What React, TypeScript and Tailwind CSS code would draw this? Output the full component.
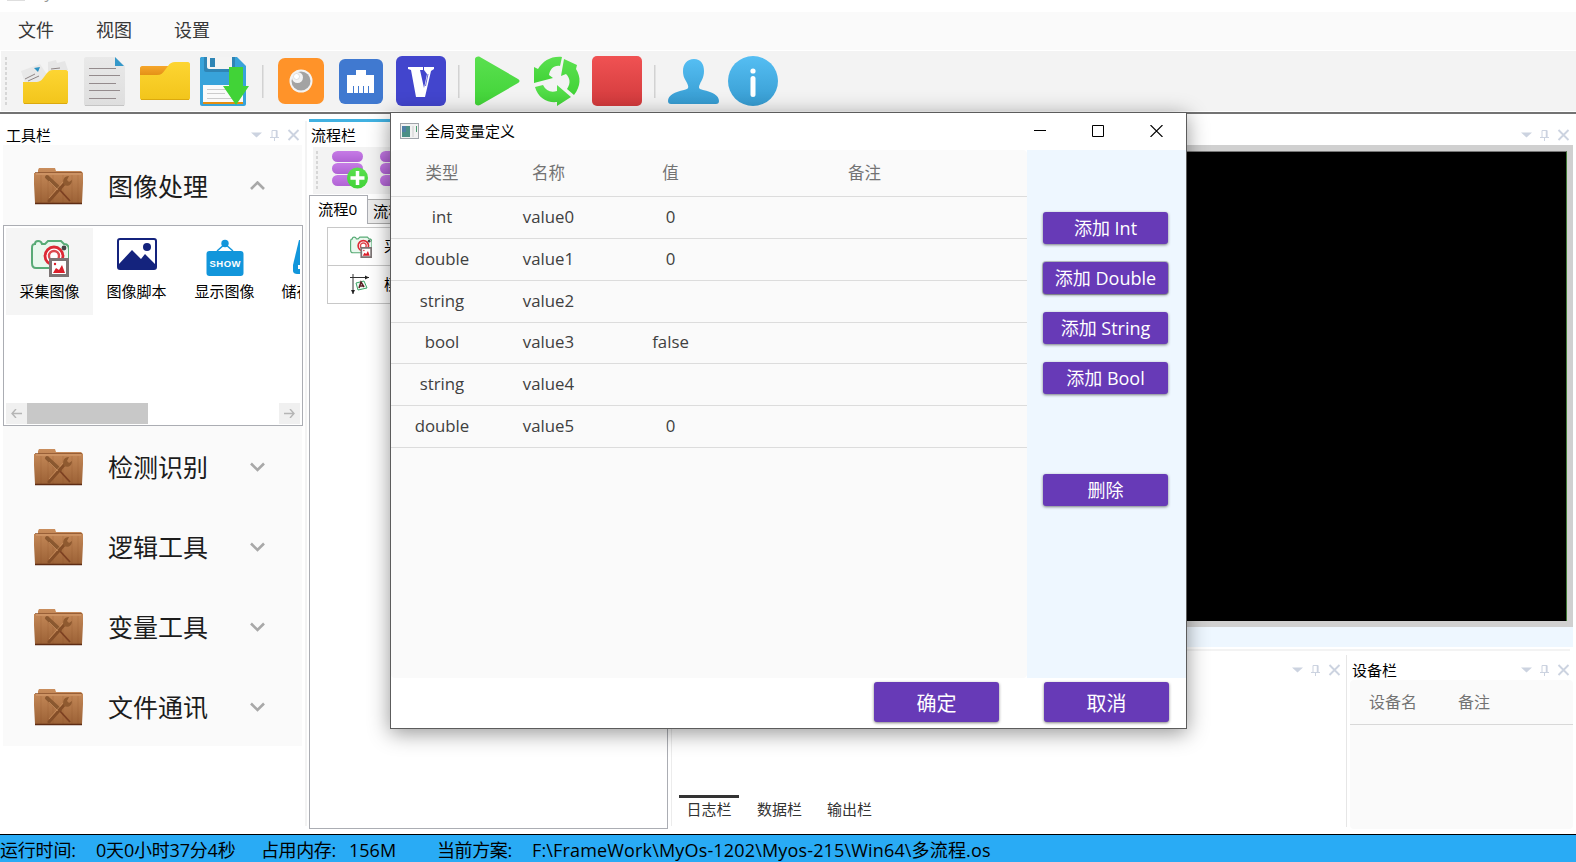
import React from "react";

type Kids = { children?: React.ReactNode };

function Svg({ w, h, vb, children, className = "" }: Kids & { w: number; h: number; vb?: string; className?: string }) {
  return (
    <svg width={w} height={h} viewBox={vb ?? `0 0 ${w} ${h}`} fill="none" className={`block shrink-0 ${className}`}>
      {children}
    </svg>
  );
}

function Gradients() {
  const stops: [string, string, string][] = [
    ["gYellow", "#fdd532", "#f2c51b"],
    ["gOrange", "#f6a62b", "#e08d12"],
    ["gPaper", "#e9e9e9", "#dedede"],
    ["gGreen", "#5ae04f", "#41d337"],
    ["gRed", "#f05253", "#d23a3c"],
    ["gBlue", "#55bef3", "#369bd0"],
    ["gPurple", "#c67be6", "#b062d4"],
    ["gWood", "#c98d5c", "#9c6236"],
  ];
  return (
    <svg width="0" height="0" className="absolute">
      <defs>
        {stops.map(([id, a, b]) => (
          <linearGradient key={id} id={id} x1="0" y1="0" x2="0" y2="1">
            <stop offset="0" stopColor={a} />
            <stop offset="1" stopColor={b} />
          </linearGradient>
        ))}
      </defs>
    </svg>
  );
}

const OpenDocs = () => (
  <Svg w={50} h={50}>
    <path d="M28 6 36 4l1 3 8-2 3 9-20 4z" fill="#e6e6e6" />
    <path d="M1 15 20 8l8 12-10 12L5 27z" fill="#e8e8e8" />
    <path d="m14 12 6-1-2 5z" fill="#2d93c4" />
    <path d="m5 23 10-5M8 25l11-5M31 13l9-1" stroke="#8e8585" strokeWidth="1" />
    <path d="M3 26h12c5 0 7-2 9-5l3-4c2-2 3-3 6-3h13c1 0 2 1 2 2v30c0 1-1 2-2 2H5c-1 0-2-1-2-2z" fill="url(#gYellow)" />
    <path d="M4 47.500h43" stroke="#dba90e" />
  </Svg>
);
const Doc = () => (
  <Svg w={50} h={50}>
    <path d="M6 1h29l10 9v38c0 1-1 2-2 2H6c-1 0-2-1-2-2V3c0-1 1-2 2-2z" fill="url(#gPaper)" />
    <path d="M5 49.500h39" stroke="#c4c4c4" />
    <path d="m35 1 9 9h-9z" fill="#3598c9" />
    <path d="M9 12.500h27M9 19.500h31M9 27.500h27M9 34.500h31M9 42.500h27" stroke="#948b8d" />
  </Svg>
);
const Folder = () => (
  <Svg w={50} h={50}>
    <path d="M0 12c0-1 1-2 2-2h28v11H0z" fill="url(#gOrange)" />
    <path d="M0 19h17c4 0 6-2 8-5l3-4c2-3 4-4 7-4h13c1 0 2 1 2 2v34c0 1-1 2-2 2H2c-1 0-2-1-2-2z" fill="url(#gYellow)" />
    <path d="M1 43.500h48" stroke="#dba90e" />
  </Svg>
);
const Save = () => (
  <Svg w={50} h={50}>
    <path d="M1 1h36l9 9v38c0 1-1 2-2 2H2c-1 0-2-1-2-2V2z" fill="#38a3da" />
    <path d="M4 1h31v15H6c-1 0-2-1-2-2z" fill="#2f85b5" />
    <path d="M7 1h25v10c0 1-1 2-2 2H9c-1 0-2-1-2-2z" fill="#f4f4f4" />
    <path d="M10 2h5v9h-5z" fill="#2f85b5" />
    <path d="M3 29h40v17H3z" fill="#fafafa" />
    <path d="M3 46h40v2H3z" fill="#e58d0f" />
    <path d="M7 33.500h25M7 37.500h18M7 42.500h25" stroke="#ccc" />
    <path d="M29 11h14v19h6L36 49 23 30h6z" fill="#41d337" />
  </Svg>
);
const Lens = () => (
  <Svg w={50} h={50}>
    <rect x="2" y="2" width="46" height="46" rx="7" fill="#ff9329" />
    <circle cx="25" cy="25" r="11.500" fill="#f3f3f3" />
    <circle cx="25" cy="25" r="9.500" fill="#a3a3a3" />
    <circle cx="21.500" cy="21.500" r="5.500" fill="#f3f3f3" />
    <circle cx="20.500" cy="20.500" r="3" fill="#fff" stroke="#ccc" strokeWidth=".6" />
  </Svg>
);
const Port = () => (
  <Svg w={50} h={50}>
    <rect x="3" y="3" width="44" height="45" rx="6" fill="#4079d0" />
    <path d="M11 37V19h9v-5h10v5h8v18h-5v-7h-1v7h-4v-7h-1v7h-4v-7h-1v7h-4v-7h-1v7z" fill="#fff" />
  </Svg>
);
const Vee = () => (
  <Svg w={50} h={50}>
    <rect width="50" height="50" rx="6" fill="#4245cd" />
    <path d="M12 11h15v3h-3l4 18 3-14-3-4v-3h10v2l-3 2-6 26h-9L15 14l-3-1z" fill="#fff" />
    <path d="m32 18-2.500 12" stroke="#4245cd" strokeWidth=".8" />
  </Svg>
);
const Play = () => (
  <Svg w={50} h={50}>
    <path d="M3 3c0-2 3-3 5-2l38 22c2 1 2 3 0 4L8 49c-2 1-5 0-5-2z" fill="url(#gGreen)" />
  </Svg>
);
const Recycle = () => (
  <Svg w={50} h={50}>
    <g fill="url(#gGreen)">
      <path d="M2 11l4 2C11 5 19 0 30 1l-2 9c-6-1-10 3-11 9l4 3-19 5z" />
      <path d="M32 3l13 6-1 4c5 8 5 17-2 26l-7-6c4-6 3-11-1-15l-5 2z" />
      <path d="M3 31l8-2c3 6 8 8 14 6v-6l14 12-14 9v-4C15 47 6 42 3 31z" />
    </g>
  </Svg>
);
const Stop = () => (
  <Svg w={50} h={50}>
    <rect width="50" height="50" rx="5" fill="url(#gRed)" />
  </Svg>
);
const User = () => (
  <Svg w={51} h={50}>
    <path d="M26 3c7 0 10 5 10 12 0 7-3 10-4 13-2 4-1 5 3 6 9 2 16 5 16 11 0 2-1 3-3 3H3c-2 0-3-1-3-3 0-6 7-9 16-11 5-1 5-3 3-7s-4-6-4-12C15 8 19 3 26 3z" fill="url(#gBlue)" />
  </Svg>
);
const Info = () => (
  <Svg w={50} h={50}>
    <circle cx="25" cy="25" r="25" fill="url(#gBlue)" />
    <circle cx="25" cy="15" r="2.600" fill="#fff" />
    <rect x="22.500" y="20" width="5" height="21" rx="2.500" fill="#fff" />
  </Svg>
);

const Database = ({ plus = false }: { plus?: boolean }) => (
  <Svg w={38} h={40}>
    <rect x="0" y="0" width="31" height="11" rx="5.500" fill="url(#gPurple)" />
    <rect x="0" y="12" width="31" height="11" rx="5.500" fill="url(#gPurple)" />
    <rect x="0" y="24" width="31" height="11" rx="5.500" fill="url(#gPurple)" />
    {plus && (
      <>
        <circle cx="25.500" cy="27" r="10.500" fill="url(#gGreen)" />
        <path d="M25.500 20v14M18.500 27h14" stroke="#fff" strokeWidth="3.500" />
      </>
    )}
  </Svg>
);

const Camera = ({ size }: { size: number }) => (
  <Svg w={size} h={size} vb="0 0 38 38">
    <path d="M4 5c0-4 6-4 7 0h3l3-3h13l3 3c4 0 5 3 5 6v14c0 3-2 4-5 4H5c-3 0-4-2-4-5V10c0-3 0-5 3-5z" fill="#e9f8ee" stroke="#58ab76" strokeWidth="2" />
    <circle cx="23" cy="17" r="9" fill="#fff" stroke="#dc2a35" strokeWidth="2.800" />
    <circle cx="23" cy="17" r="5" fill="#fff" stroke="#dc4a50" strokeWidth="2.400" />
    <circle cx="33" cy="9" r="2.400" fill="#444" />
    <path d="M19.500 20.500h17v16h-17z" fill="#fff" stroke="#7c7474" strokeWidth="3" />
    <path d="m22 34 3-5 3 2 3-5 3 8z" fill="#db1f2b" />
    <circle cx="24" cy="25" r="1.200" fill="#db1f2b" />
  </Svg>
);
const Picture = () => (
  <Svg w={40} h={32}>
    <rect x="1" y="1" width="38" height="30" rx="2" fill="#fff" stroke="#14237d" strokeWidth="2" />
    <path d="M2 26 15 12l9 9 4-5 10 10v5H2z" fill="#14237d" />
    <circle cx="30" cy="9" r="4" fill="#14237d" />
  </Svg>
);
const Show = () => (
  <Svg w={38} h={37}>
    <circle cx="19" cy="4.500" r="3.700" fill="#1296db" />
    <path d="m11 12 8-7 8 7" stroke="#1296db" strokeWidth="1.500" />
    <rect x="0.500" y="12" width="37" height="25" rx="3" fill="#1296db" />
    <text x="19" y="28" fontSize="9.500" fontWeight="700" textAnchor="middle" textLength="31" fontFamily="Liberation Sans, sans-serif" fill="#fff">SHOW</text>
  </Svg>
);
const Disk = () => (
  <Svg w={38} h={37}>
    <path d="M6 1h26l6 25v6c0 2-2 3-4 3H4c-2 0-4-1-4-3v-6z" fill="#1296db" />
    <path d="M5 26h26v4H5z" fill="#fff" />
  </Svg>
);
const Axes = () => (
  <Svg w={22} h={22}>
    <path d="M3 0v20M0 3.500h19" stroke="#333" />
    <path d="m1 16 2 4 2-4zM15 1.500l4 2-4 2z" fill="#222" />
    <path d="m6 9 8-2 3 7-9 2z" fill="#effaf2" stroke="#3ba566" />
    <path d="m9 14 2-6 3 5M10 12h3" stroke="#5c1c24" strokeWidth="1.500" />
  </Svg>
);
const WoodFolder = () => (
  <Svg w={50} h={38}>
    <path d="M4 6V3l1-2h16l1 3h25l2 2v10l-1 20H1L0 17V6z" fill="url(#gWood)" />
    <path d="M1 5.500h47" stroke="#8d5530" strokeOpacity=".8" />
    <path d="M2 7h45" stroke="#d8a072" />
    <path d="M7 8v28M14 8v28M19 8v28M29 8v28M38 8v28M44 8v28" stroke="#7e4722" strokeOpacity=".16" />
    <path d="M1 36.500h47" stroke="#5e2c14" strokeWidth="1.400" />
    <path d="m13 10 13 12" stroke="#8a5830" strokeWidth="4" strokeLinecap="round" />
    <path d="m25 22 11 12" stroke="#7c4022" strokeWidth="1.800" />
    <path d="M15 34 31 16" stroke="#844e28" strokeWidth="3" strokeLinecap="round" />
    <path d="M35 9c-5 0-7 4-5 9 4 2 8 0 8-5l-3 2-2-2z" fill="#8f5a30" />
    <path d="m15 14 9 9M15 31l14-16" stroke="#d39a68" strokeWidth=".6" />
  </Svg>
);

function PaneButtons() {
  return (
    <Svg w={49} h={12}>
      <path d="M0 3.500h11l-5.500 5z" fill="#ccd3e0" />
      <path d="M21 1.500h5v7h-5zM19 8.500h9M23.500 9v3" stroke="#ccd3e0" />
      <path d="M25.500 1.500v7" stroke="#ccd3e0" strokeWidth="1.500" />
      <path d="m37.500 1 10 10M47.500 1l-10 10" stroke="#ccd3e0" strokeWidth="1.900" />
    </Svg>
  );
}

function Separator() {
  return <div className="mx-[12px] h-[33px] w-[2px] border-r border-[#e2e2e2] bg-[#d2d2d2]" />;
}

function Grip({ n }: { n: number }) {
  return (
    <div className="flex w-[3px] shrink-0 flex-col gap-[2px]">
      {Array.from({ length: n }, (_, i) => (
        <div key={i} className="h-[3px] w-[2px] bg-[#d6d6d6]" />
      ))}
    </div>
  );
}

function SectionHeader({ title, open = false }: { title: string; open?: boolean }) {
  return (
    <div className="flex h-20 shrink-0 items-center bg-[#fafafa] pl-[31px] pr-[37px] pt-px">
      <WoodFolder />
      <span className="ml-[24px] flex-1 pt-px text-[25px] leading-[36px] text-[#1c1c1c]">{title}</span>
      <Svg w={15} h={10}>
        <path d={open ? "m1 8 6.500-6.500L14 8" : "m1 1.500 6.500 6.500L14 1.500"} stroke="#a8a8a8" strokeWidth="2.600" />
      </Svg>
    </div>
  );
}

function ToolItem({ label, selected = false, children }: Kids & { label: string; selected?: boolean }) {
  return (
    <div className={`flex h-[87px] w-[87px] shrink-0 flex-col items-center ${selected ? "bg-[#f5f5f5]" : ""}`}>
      <div className="flex h-[53px] items-center">{children}</div>
      <span className="whitespace-nowrap text-[15px] leading-[20px] text-black">{label}</span>
    </div>
  );
}

function ToolPane() {
  return (
    <div className="flex w-[302px] shrink-0 flex-col pl-[3px]">
      <div className="flex h-[31px] items-end justify-between pb-0 pl-[3px] pr-[2px]">
        <span className="text-[15px] leading-[20px] text-black">工具栏</span>
        <div className="pb-[4px]"><PaneButtons /></div>
      </div>
      <SectionHeader title="图像处理" open />
      <div className="mr-[-1px] flex h-[201px] shrink-0 flex-col border border-[#abadb3] bg-white px-[2px] pt-[2px]">
        <div className="flex flex-1 overflow-hidden">
          <ToolItem label="采集图像" selected><div className="pt-[7px]"><Camera size={38} /></div></ToolItem>
          <ToolItem label="图像脚本"><div className="pb-px"><Picture /></div></ToolItem>
          <div className="flex pl-px">
            <ToolItem label="显示图像"><div className="pt-[5px]"><Show /></div></ToolItem>
            <ToolItem label="储存图像"><div className="pt-[6px]"><Disk /></div></ToolItem>
          </div>
        </div>
        <div className="flex h-[22px] items-start">
          <div className="flex h-[21px] w-[21px] items-center justify-center bg-[#f0f0f0]">
            <Svg w={11} h={9}><path d="M5 0 1 4.500 5 9M1 4.500h10" stroke="#b5b5b5" strokeWidth="1.400" /></Svg>
          </div>
          <div className="h-[21px] w-[121px] bg-[#c8c8c8]" />
          <div className="ml-auto flex h-[21px] w-[21px] items-center justify-center bg-[#f0f0f0]">
            <Svg w={11} h={9}><path d="m6 0 4 4.500L6 9M10 4.500H0" stroke="#b5b5b5" strokeWidth="1.400" /></Svg>
          </div>
        </div>
      </div>
      <SectionHeader title="检测识别" />
      <SectionHeader title="逻辑工具" />
      <SectionHeader title="变量工具" />
      <SectionHeader title="文件通讯" />
    </div>
  );
}

function FlowPane() {
  return (
    <div className="ml-[2px] flex w-[359px] shrink-0 flex-col pb-[5px] pt-[5px]">
      <div className="h-[3px] bg-[#41b1e1]" />
      <div className="flex h-[25px] items-end pb-px pl-[2px] text-[15px] leading-[22px] text-black">流程栏</div>
      <div className="ml-[4px] flex h-[47px] items-start bg-[#f3f3f3] pl-[3px] pt-[4px]">
        <Grip n={8} />
        <div className="ml-[13px] flex gap-[10px]">
          <Database plus />
          <Database />
        </div>
      </div>
      <div className="mt-px flex h-[29px] items-end">
        <div className="flex h-[29px] w-[59px] items-center border border-b-0 border-[#abadb3] bg-white pb-[2px] pl-[8px] text-[15.3px] text-black">流程0</div>
        <div className="flex h-[25px] w-[59px] items-center border border-l-0 border-[#acacac] bg-[#ececec] pl-[5px] text-[15.3px] text-black">流程1</div>
      </div>
      <div className="flex-1 border border-t-0 border-[#abadb3] bg-white pl-[17px] pt-[3px]">
        <div className="w-[300px] border border-[#c8c8c8] text-[15px] text-black">
          <div className="flex h-[38px] items-center border-b border-[#c8c8c8] pl-[22px]">
            <Camera size={22} />
            <span className="ml-[12px]">采集图像</span>
          </div>
          <div className="flex h-[37px] items-center pl-[22px]">
            <Axes />
            <span className="ml-[12px]">模板匹配</span>
          </div>
        </div>
      </div>
    </div>
  );
}

function LogPane() {
  return (
    <div className="flex flex-1 flex-col">
      <div className="flex justify-end pr-[5px] pt-[11px]"><PaneButtons /></div>
      <div className="flex-1" />
      <div className="flex h-[39px] pl-[7px] text-[15px] leading-[20px] text-[#333]">
        <div className="w-[60px] border-t-[3px] border-[#333] pt-px text-center">日志栏</div>
        <div className="ml-[18px] pt-[4px]">数据栏</div>
        <div className="ml-[25px] pt-[4px]">输出栏</div>
      </div>
    </div>
  );
}

function DevicePane() {
  return (
    <div className="flex w-[229px] flex-col pb-[5px] pl-[3px] pr-[3px]">
      <div className="flex h-[27px] items-end justify-between pl-[2px] pr-[3px]">
        <span className="text-[15px] leading-[20px] text-black">设备栏</span>
        <div className="pb-[4px]"><PaneButtons /></div>
      </div>
      <div className="flex-1 rounded-[4px] bg-[#fafafa]">
        <div className="flex h-[45px] items-center border-b border-[#d8d8d8] pl-[19px] text-[16px] text-[#737373]">
          <span>设备名</span>
          <span className="ml-[41px]">备注</span>
        </div>
      </div>
    </div>
  );
}

function RightArea() {
  return (
    <div className="flex flex-1 flex-col pl-[4px]">
      <div className="flex h-[31px] items-end justify-end pb-[4px] pr-[6px]"><PaneButtons /></div>
      <div className="mr-[3px] h-[482px] border-[6px] border-[#d0d0d0] bg-black">
        <div className="h-full border-r border-t border-r-[#3f7a35] border-t-[#777]" />
      </div>
      <div className="mr-[3px] h-[20px] bg-[#eef7ff]" />
      <div className="mr-[6px] mt-[2px] h-[2px] bg-[#f3f3f3]" />
      <div className="flex flex-1 pt-[2px]">
        <LogPane />
        <div className="mb-[7px] mt-[2px] w-px bg-[#e6e6e6]" />
        <DevicePane />
      </div>
    </div>
  );
}

const ROWS = [
  ["int", "value0", "0", ""],
  ["double", "value1", "0", ""],
  ["string", "value2", "", ""],
  ["bool", "value3", "false", ""],
  ["string", "value4", "", ""],
  ["double", "value5", "0", ""],
];

function PurpleButton({ label, className = "h-[32px] text-[18px]" }: { label: string; className?: string }) {
  return (
    <button className={`flex w-[125px] items-center justify-center whitespace-pre rounded-[3px] bg-[#673ab7] text-white shadow-[0_1px_3px_rgba(0,0,0,0.5)] ${className}`}>
      {label}
    </button>
  );
}

function Dialog() {
  const cols = "grid grid-cols-[100px_113px_131px_257px] pl-px";
  return (
    <div className="absolute left-[390px] top-[112px] flex h-[617px] w-[797px] flex-col border border-[#5c5c5c] bg-white shadow-[0_4px_20px_rgba(0,0,0,0.42)]">
      <div className="flex h-[37px] shrink-0 items-center pb-[2px] pl-[9px] pr-[23px]">
        <Svg w={19} h={16}>
          <rect x=".5" y=".5" width="18" height="15" fill="#f2f2f2" stroke="#a0a4aa" />
          <rect x="2" y="3" width="8" height="11" fill="#4b8f86" />
          <rect x="2" y="3" width="4" height="6" fill="#4f7fa5" />
          <path d="M12 3h2v11h-2z" fill="#e0e0e0" />
          <path d="M16.500 3v6" stroke="#4a9a70" />
        </Svg>
        <span className="ml-[6px] flex-1 text-[15px] leading-[20px] text-black">全局变量定义</span>
        <div className="flex items-center gap-[46px]">
          <Svg w={12} h={12}><path d="M0 5.500h12" stroke="#000" /></Svg>
          <Svg w={12} h={12}><path d="M.5.500h11v11H.5z" stroke="#000" /></Svg>
          <Svg w={13} h={12}><path d="m.5 0 12 12M12.500 0 .5 12" stroke="#000" strokeWidth="1.100" /></Svg>
        </div>
      </div>
      <div className="flex h-[528px] shrink-0">
        <div className="w-[636px] rounded-[4px] bg-[#fafafa] text-[16.8px] text-[#404040]">
          <div className={`${cols} h-[47px] items-center border-b border-[#dcdcdc] pt-px text-center text-[16.5px] text-[#737373]`}>
            <span>类型</span>
            <span>名称</span>
            <span>值</span>
            <span>备注</span>
          </div>
          {ROWS.map((row, i) => (
            <div key={i} className={`${cols} h-[41.85px] items-center border-b border-[#dcdcdc] pb-[2px] text-center`}>
              {row.map((cell, j) => (
                <span key={j}>{cell}</span>
              ))}
            </div>
          ))}
        </div>
        <div className="flex flex-1 flex-col items-center gap-[18px] bg-[#eef7ff] pr-[2px] pt-[62px]">
          <PurpleButton label="添加 Int" />
          <PurpleButton label="添加 Double" className="h-[32px] text-[18px] ring-1 ring-[#00000033]" />
          <PurpleButton label="添加 String" />
          <PurpleButton label="添加 Bool" />
          <PurpleButton label="删除" className="mt-[62px] h-[32px] text-[18px]" />
        </div>
      </div>
      <div className="flex flex-1 items-start justify-end gap-[45px] pr-[17px] pt-[4px]">
        <PurpleButton label="确定" className="h-[40px] pt-[4px] text-[20px]" />
        <PurpleButton label="取消" className="h-[40px] pt-[4px] text-[20px]" />
      </div>
    </div>
  );
}

export default function App() {
  return (
    <div className="relative flex h-[862px] w-[1576px] flex-col overflow-hidden bg-white font-['Open_Sans','Noto_Sans_CJK_SC',sans-serif]">
      <Gradients />
      <div className="flex h-[12px] shrink-0 items-start overflow-hidden pl-[7px]">
        <div className="h-[1px] w-[18px] bg-[#dedede]" />
        <span className="ml-[5px] mt-[-18px] text-[16px] leading-[20px] text-[#999]">MyOs</span>
      </div>
      <div className="flex h-[38px] shrink-0 items-center gap-[42px] bg-[#fafafa] pb-px pl-[18px] text-[18px] text-[#383838]">
        <span>文件</span>
        <span>视图</span>
        <span>设置</span>
      </div>
      <div className="ml-px mt-px flex h-[60px] shrink-0 items-center bg-[#f3f3f3] pl-[4px]">
        <Grip n={10} />
        <div className="ml-[12px] flex items-center">
          <div className="flex gap-[10px]"><OpenDocs /><Doc /><Folder /><Save /></div>
          <Separator />
          <div className="flex gap-[10px]"><Lens /><Port /><Vee /></div>
          <Separator />
          <div className="flex gap-[10px]"><Play /><Recycle /><Stop /></div>
          <Separator />
          <div className="flex gap-[9px]"><User /><Info /></div>
        </div>
      </div>
      <div className="mt-px h-[2px] shrink-0 bg-[#737373]" />
      <div className="flex h-[720px] shrink-0">
        <ToolPane />
        <div className="mb-[8px] ml-[3px] mt-[7px] w-[2px] bg-[#f3f3f3]" />
        <FlowPane />
        <div className="mb-[8px] ml-[3px] mt-[7px] w-px bg-[#ececec]" />
        <div className="ml-[-4px] flex flex-1"><RightArea /></div>
      </div>
      <div className="flex h-[28px] shrink-0 items-center whitespace-nowrap border-t border-black bg-[#29abf5] pt-[2px] text-[18px] leading-[22px] text-black">
        <span className="w-[96px] tracking-[-0.2px]">运行时间:</span>
        <span className="w-[165px] tracking-[-0.2px]">0天0小时37分4秒</span>
        <span className="w-[88px] tracking-[-0.4px]">占用内存:</span>
        <span className="w-[88px]">156M</span>
        <span className="w-[95px] tracking-[-0.4px]">当前方案:</span>
        <span className="tracking-[0.16px]">F:\FrameWork\MyOs-1202\Myos-215\Win64\多流程.os</span>
      </div>
      <Dialog />
    </div>
  );
}
